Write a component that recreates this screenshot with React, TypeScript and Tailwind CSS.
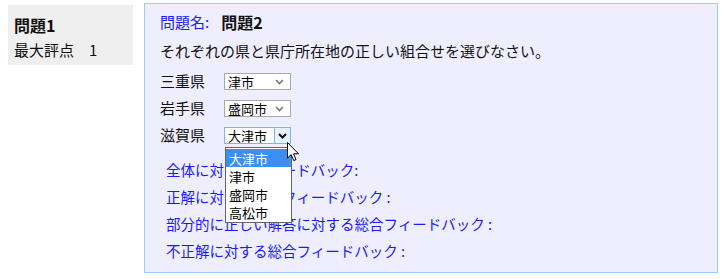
import React from "react";

const font = { fontFamily: '"Noto Sans CJK JP", "Liberation Sans", sans-serif' };

function Chevron({ dark }: { dark?: boolean }) {
  return (
    <svg width="9" height="6" viewBox="0 0 9 6" className="shrink-0">
      <path
        d="M1 1 L4.5 4.5 L8 1"
        fill="none"
        stroke={dark ? "#111" : "#777"}
        strokeWidth={dark ? 2 : 1.6}
      />
    </svg>
  );
}

function Select({ value }: { value: string }) {
  return (
    <div className="flex items-center justify-between w-[67px] h-[17px] bg-white border border-[#a9a9a9] pl-[3px] pr-[6px] text-[13px] leading-none text-black">
      <span>{value}</span>
      <Chevron />
    </div>
  );
}

function OpenSelect({ value, options }: { value: string; options: string[] }) {
  return (
    <div className="relative">
      <div className="flex items-stretch w-[67px] h-[17px] bg-white border border-[#7eb4ea] text-[13px] leading-none text-black">
        <span className="flex-1 flex items-center pl-[3px]">{value}</span>
        <span className="w-[16px] flex items-center justify-center bg-[#e5f1fb] border-l border-[#7eb4ea]">
          <Chevron dark />
        </span>
      </div>
      <div className="absolute left-[1px] top-[20px] z-10 w-[67px] bg-white border border-[#646464] py-[1px] text-[13px] leading-none text-black">
        {options.map((o, i) => (
          <div
            key={o}
            className={
              i === 0
                ? "h-[18px] flex items-center pl-[3px] bg-[#3d8ef0] text-white"
                : "h-[18px] flex items-center pl-[3px]"
            }
          >
            {o}
          </div>
        ))}
      </div>
      <svg
        className="absolute left-[63px] top-[15px] z-20"
        width="13"
        height="20"
        viewBox="0 0 13 20"
      >
        <path
          d="M0.5 0.5 L0.5 16 L4.2 12.6 L6.8 18.6 L9 17.6 L6.5 11.8 L11.5 11.8 Z"
          fill="#fff"
          stroke="#000"
          strokeWidth="1"
          strokeLinejoin="round"
        />
      </svg>
    </div>
  );
}

export default function App() {
  const rows = [
    { label: "三重県", value: "津市" },
    { label: "岩手県", value: "盛岡市" },
  ];
  const feedback = [
    "全体に対するフィードバック:",
    "正解に対する総合フィードバック :",
    "部分的に正しい解答に対する総合フィードバック :",
    "不正解に対する総合フィードバック :",
  ];

  return (
    <div className="w-[723px] h-[279px] bg-white overflow-hidden" style={font}>
      <div className="flex pl-2 pt-[3px] gap-[11px]">
        <div className="mt-[2px] w-[125px] h-[60px] bg-[#efefef] pl-[6px] pt-[10px] text-[#111]">
          <div className="h-[20px] flex items-center text-[16px] font-bold">問題1</div>
          <div className="mt-[5px] h-[20px] flex items-center text-[15px]">最大評点　1</div>
        </div>

        <div className="w-[574px] h-[270px] border border-[#99ccff] bg-[#efeefe] pl-[15px] pt-[8px] text-[#111]">
          <div className="h-[20px] flex items-center text-[15px]">
            <span className="text-[#1a1aff]">問題名:</span>
            <span className="ml-[12px] text-[16px] font-bold">問題2</span>
          </div>
          <div className="mt-[9px] h-[20px] flex items-center text-[15px]">
            それぞれの県と県庁所在地の正しい組合せを選びなさい。
          </div>

          <div className="mt-[7px]">
            {rows.map((r) => (
              <div key={r.label} className="h-[27px] flex items-center">
                <span className="w-[64px] text-[15px]">{r.label}</span>
                <Select value={r.value} />
              </div>
            ))}
            <div className="h-[27px] flex items-center">
              <span className="w-[64px] text-[15px]">滋賀県</span>
              <OpenSelect value="大津市" options={["大津市", "津市", "盛岡市", "高松市"]} />
            </div>
          </div>

          <div className="mt-[7px] pl-[6px] text-[#1a1aff] text-[14.5px]">
            {feedback.map((f) => (
              <div key={f} className="h-[27px] flex items-center">
                {f}
              </div>
            ))}
          </div>
        </div>
      </div>
    </div>
  );
}
